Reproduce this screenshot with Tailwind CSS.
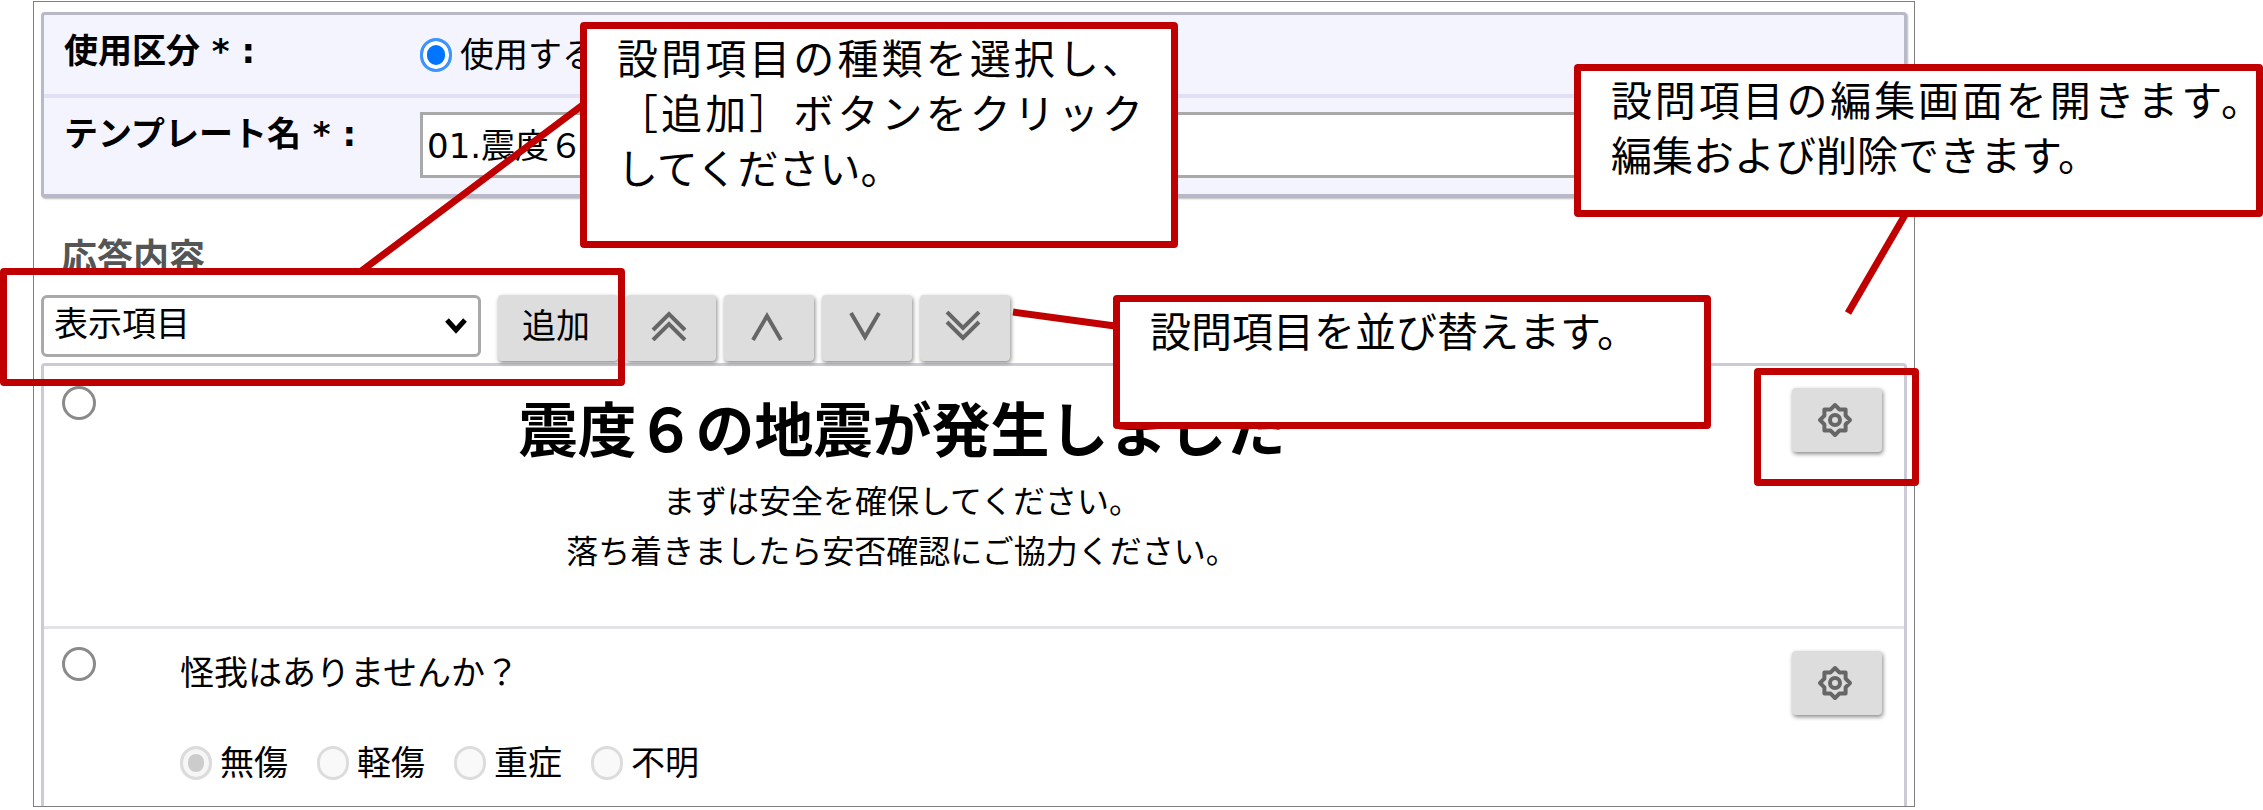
<!DOCTYPE html>
<html lang="ja">
<head>
    <meta charset="UTF-8">
    <title>テンプレート編集</title>
    <script src="https://cdn.jsdelivr.net/npm/@tailwindcss/browser@4"></script>
</head>
<body class="relative bg-white overflow-hidden text-black text-[34px] leading-10 font-['DejaVu_Sans','Noto_Sans_CJK_JP',sans-serif]">
    <!-- 編集画面 -->
    <main class="mt-px ml-[33px] mr-[348px] border border-[#7f7f7f] px-[7px] pt-[10px]">
        <!-- 基本設定 -->
        <section class="border-3 border-b-4 border-[#b9b8c8] rounded-sm bg-[#f4f4ff] shadow-[1px_1px_2px_#bbbbbb]">
            <div class="flex h-[83px] border-b-4 border-[#e1e0f6] pl-5">
                <span class="w-[356px] pt-4 font-bold" id="useLabel">使用区分 * :</span>
                <div class="flex items-center gap-2" role="radiogroup" aria-labelledby="useLabel">
                    <input type="radio" id="useOn" name="use" checked class="appearance-none w-8 h-[34px] rounded-full border-3 border-[#3d94ff] bg-[#0075ff] shadow-[inset_0_0_0_4px_#ffffff]">
                    <label for="useOn">使用する</label>
                </div>
            </div>
            <div class="flex h-24 pl-5 pr-10">
                <label for="tplName" class="w-[356px] pt-4 font-bold">テンプレート名 * :</label>
                <input type="text" id="tplName" value="01.震度６" class="flex-1 min-w-0 h-[66px] mt-[14px] px-1 pb-1 bg-white border-3 border-[#a9a9a9]">
            </div>
        </section>

        <h2 class="mt-10 pl-5 text-[36px] leading-10 font-bold text-[#555555]">応答内容</h2>

        <!-- 項目の追加と並び替え -->
        <div class="flex mt-[17px] gap-2">
            <div class="relative w-[440px] h-[62px] mr-[9px]">
                <select aria-label="項目の種類" class="appearance-none w-full h-full pl-[10px] pb-1 bg-white border-3 border-[#a9a9a9] rounded-md">
                    <option>表示項目</option>
                </select>
                <svg class="absolute right-3 top-5 pointer-events-none" width="26" height="22" viewBox="0 0 26 22" fill="none" stroke="#000" stroke-width="5"><path d="M4 5l9 10L22 5"/></svg>
            </div>
            <button class="w-[120px] h-[66px] pr-1 pb-1 bg-[#dddddd] rounded-sm shadow-[1px_2px_4px_#888888]">追加</button>
            <button aria-label="先頭へ" class="flex items-center justify-center w-[90px] h-[66px] pr-1 pb-1 bg-[#dddddd] rounded-sm shadow-[1px_2px_4px_#888888]">
                <svg width="36" height="30" viewBox="0 0 36 30" fill="none" stroke="#666" stroke-width="4"><path d="M2 19L18 3l16 16M2 29l16-16 16 16"/></svg>
            </button>
            <button aria-label="上へ" class="flex items-center justify-center w-[90px] h-[66px] pr-1 pb-1 bg-[#dddddd] rounded-sm shadow-[1px_2px_4px_#888888]">
                <svg width="36" height="30" viewBox="0 0 36 30" fill="none" stroke="#666" stroke-width="4"><path d="M4 29L18 5l14 24"/></svg>
            </button>
            <button aria-label="下へ" class="flex items-center justify-center w-[90px] h-[66px] pr-1 pb-1 bg-[#dddddd] rounded-sm shadow-[1px_2px_4px_#888888]">
                <svg width="36" height="30" viewBox="0 0 36 30" fill="none" stroke="#666" stroke-width="4"><path d="M4 2l14 24L32 2"/></svg>
            </button>
            <button aria-label="末尾へ" class="flex items-center justify-center w-[90px] h-[66px] pr-1 pb-1 bg-[#dddddd] rounded-sm shadow-[1px_2px_4px_#888888]">
                <svg width="36" height="30" viewBox="0 0 36 30" fill="none" stroke="#666" stroke-width="4"><path d="M2 1l16 16L34 1M2 11l16 16 16-16"/></svg>
            </button>
        </div>

        <!-- 設問項目の一覧 -->
        <section class="mt-[2px] border-3 border-b-0 border-[#cbcad6] rounded-t-sm">
            <div class="flex items-start h-[263px] border-b-3 border-[#e3e3e6] pl-[18px] pr-[22px]">
                <input type="radio" name="item" aria-label="項目1" class="appearance-none w-[34px] h-[34px] mt-5 rounded-full border-3 border-[#8a8a8a] bg-white">
                <div class="flex-1 ml-[84px] mr-[168px] text-center">
                    <h1 class="mt-[26px] text-[59px] leading-[80px] font-bold">震度６の地震が発生しました</h1>
                    <p class="mt-[5px] text-[32px] leading-[50px]">まずは安全を確保してください。<br>落ち着きましたら安否確認にご協力ください。</p>
                </div>
                <button aria-label="項目1を編集" class="flex items-center justify-center w-[90px] h-16 pr-1 bg-[#dddddd] rounded-sm mt-[22px] shadow-[1px_2px_4px_#888888]">
                    <svg width="36" height="36" viewBox="0 0 36 36" fill="none" stroke="#666" stroke-width="4" stroke-linejoin="round">
                        <path d="M33 18l-4.400 4.400v6.200h-6.200L18 33l-4.400-4.400H7.400v-6.200L3 18l4.400-4.400V7.400h6.200L18 3l4.400 4.400h6.200v6.200z"/><circle cx="18" cy="18" r="5"/>
                    </svg>
                </button>
            </div>
            <div class="flex items-start h-[177px] pl-[18px] pr-[22px]">
                <input type="radio" name="item" aria-label="項目2" class="appearance-none w-[34px] h-[34px] mt-[18px] rounded-full border-3 border-[#8a8a8a] bg-white">
                <fieldset class="flex-1 ml-[84px]">
                    <legend class="pt-6">怪我はありませんか？</legend>
                    <div class="flex mt-[50px] gap-[29px]">
                        <div class="flex items-center gap-2">
                            <input type="radio" id="hurt0" name="hurt" checked disabled class="appearance-none w-8 h-[34px] rounded-full border-3 border-[#dcdcdc] bg-[#cccccc] shadow-[inset_0_0_0_5px_#f6f6f6]">
                            <label for="hurt0">無傷</label>
                        </div>
                        <div class="flex items-center gap-2">
                            <input type="radio" id="hurt1" name="hurt" disabled class="appearance-none w-8 h-[34px] rounded-full border-3 border-[#dcdcdc] bg-[#f9f9f9]">
                            <label for="hurt1">軽傷</label>
                        </div>
                        <div class="flex items-center gap-2">
                            <input type="radio" id="hurt2" name="hurt" disabled class="appearance-none w-8 h-[34px] rounded-full border-3 border-[#dcdcdc] bg-[#f9f9f9]">
                            <label for="hurt2">重症</label>
                        </div>
                        <div class="flex items-center gap-2">
                            <input type="radio" id="hurt3" name="hurt" disabled class="appearance-none w-8 h-[34px] rounded-full border-3 border-[#dcdcdc] bg-[#f9f9f9]">
                            <label for="hurt3">不明</label>
                        </div>
                    </div>
                </fieldset>
                <button aria-label="項目2を編集" class="flex items-center justify-center w-[90px] h-16 pr-1 bg-[#dddddd] rounded-sm mt-[22px] shadow-[1px_2px_4px_#888888]">
                    <svg width="36" height="36" viewBox="0 0 36 36" fill="none" stroke="#666" stroke-width="4" stroke-linejoin="round">
                        <path d="M33 18l-4.400 4.400v6.200h-6.200L18 33l-4.400-4.400H7.400v-6.200L3 18l4.400-4.400V7.400h6.200L18 3l4.400 4.400h6.200v6.200z"/><circle cx="18" cy="18" r="5"/>
                    </svg>
                </button>
            </div>
        </section>
    </main>

    <!-- 引き出し線 -->
    <svg class="absolute left-0 top-0 pointer-events-none" width="2263" height="800" stroke="#c00000" stroke-width="7">
        <path d="M584 104L360 272M1013 312l102 14M1905 215l-57 98"/>
    </svg>

    <!-- 強調枠 -->
    <div class="absolute left-0 top-[268px] w-[625px] h-[118px] border-7 border-[#c00000] rounded-sm"></div>
    <div class="absolute left-[1754px] top-[368px] w-[165px] h-[118px] border-7 border-[#c00000] rounded-sm"></div>

    <!-- 吹き出し -->
    <div class="absolute left-[580px] top-[22px] w-[598px] h-[226px] border-7 border-[#c00000] rounded-sm bg-white pl-[30px] pr-7 pt-1 text-[41px] leading-[55px]">
        <p class="text-justify">設問項目の種類を選択し、［追加］ボタンをクリックしてください。</p>
    </div>
    <div class="absolute left-[1574px] top-[64px] w-[689px] h-[153px] border-7 border-[#c00000] rounded-sm bg-white pl-[30px] pt-1 text-[41px] leading-[55px]">
        <p class="-mr-[6px] [text-align-last:justify]">設問項目の編集画面を開きます。</p>
        <p>編集および削除できます。</p>
    </div>
    <div class="absolute left-[1113px] top-[295px] w-[598px] h-[134px] border-7 border-[#c00000] rounded-sm bg-white pl-[30px] pt-1 text-[41px] leading-[55px]">
        <p>設問項目を並び替えます。</p>
    </div>
</body>
</html>
